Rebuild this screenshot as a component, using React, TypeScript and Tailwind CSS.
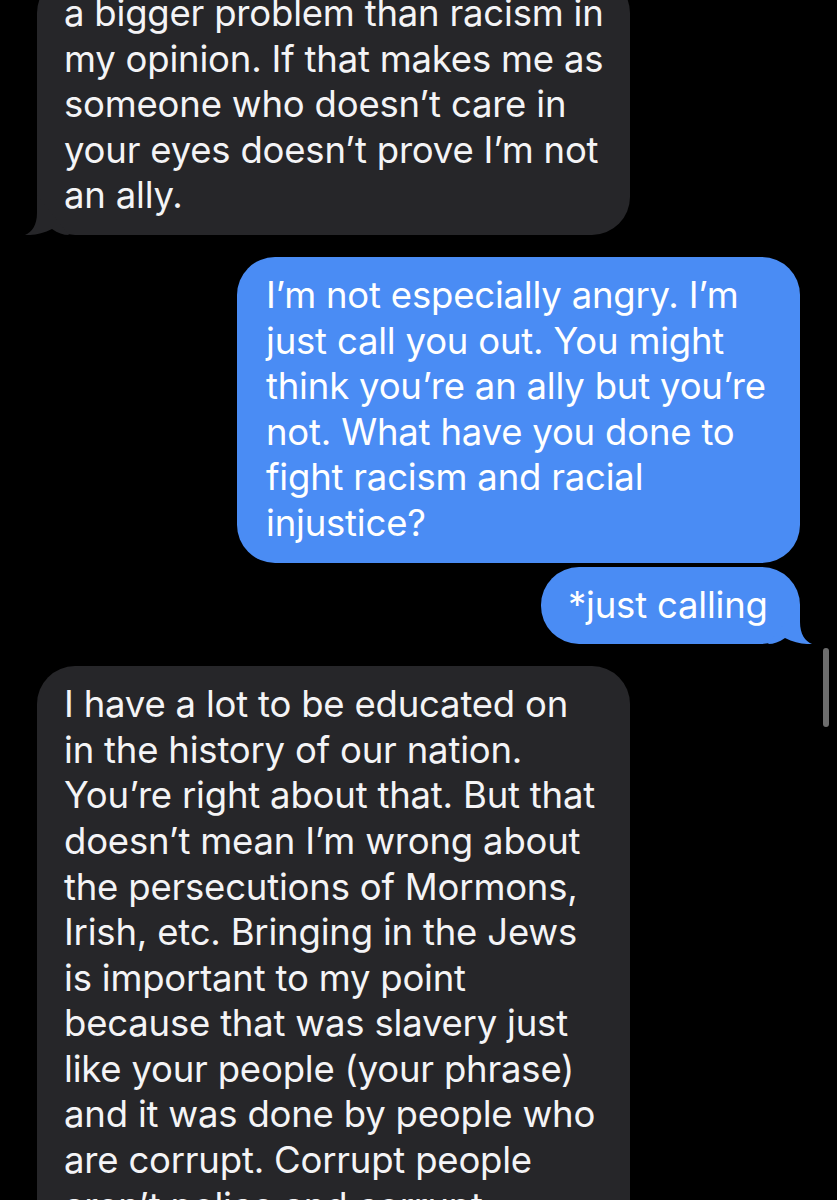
import React from "react";

const font = { fontFamily: "Inter, 'Noto Sans', sans-serif" };

function Tail({ side, color }: { side: "left" | "right"; color: string }) {
  const isRight = side === "right";
  return (
    <svg
      width="44"
      height="40"
      viewBox="0 0 44 40"
      className={
        isRight
          ? "absolute bottom-0 right-[-12px]"
          : "absolute bottom-0 left-[-12px] -scale-x-100"
      }
    >
      <path
        d="M32 0 L32 18 C32 30 37 37 44 40 C36 40.5 26 38.5 17 34 C11 38 6 40 0 40 Z"
        fill={color}
      />
    </svg>
  );
}

function Lines({ lines }: { lines: string[] }) {
  return (
    <>
      {lines.map((l, i) => (
        <div key={i} className="whitespace-nowrap">
          {l}
        </div>
      ))}
    </>
  );
}

export default function App() {
  const gray = "#262629";
  const blue = "#4a8cf4";
  return (
    <div
      className="relative h-[1200px] w-[837px] overflow-hidden bg-black text-[36.5px] leading-[45.6px] tracking-[-0.2px] text-[#f4f4f6]"
      style={font}
    >
      <div className="flex flex-col">
        <div className="relative ml-[37px] mt-[-25px] w-[593px] rounded-[38px] bg-[#262629] py-[16px] pl-[27px]">
          <Lines
            lines={[
              "a bigger problem than racism in",
              "my opinion. If that makes me as",
              "someone who doesn’t care in",
              "your eyes doesn’t prove I’m not",
              "an ally.",
            ]}
          />
          <Tail side="left" color={gray} />
        </div>

        <div className="mr-[37px] mt-[22px] flex flex-col items-end gap-[4px]">
          <div className="relative w-[563px] rounded-[38px] bg-[#4a8cf4] py-[16px] pl-[29px] text-white">
            <Lines
              lines={[
                "I’m not especially angry. I’m",
                "just call you out. You might",
                "think you’re an ally but you’re",
                "not. What have you done to",
                "fight racism and racial",
                "injustice?",
              ]}
            />
          </div>
          <div className="relative w-[259px] rounded-[38px] bg-[#4a8cf4] py-[16px] pl-[27px] text-white">
            <Lines lines={["*just calling"]} />
            <Tail side="right" color={blue} />
          </div>
        </div>

        <div className="relative ml-[37px] mt-[22px] w-[593px] rounded-[38px] bg-[#262629] py-[16px] pl-[27px]">
          <Lines
            lines={[
              "I have a lot to be educated on",
              "in the history of our nation.",
              "You’re right about that. But that",
              "doesn’t mean I’m wrong about",
              "the persecutions of Mormons,",
              "Irish, etc. Bringing in the Jews",
              "is important to my point",
              "because that was slavery just",
              "like your people (your phrase)",
              "and it was done by people who",
              "are corrupt. Corrupt people",
              "aren’t police and corrupt",
              "people aren’t everyone.",
            ]}
          />
        </div>
      </div>

      <div className="absolute left-[823px] top-[648px] h-[79px] w-[6px] rounded-full bg-[#6d6d6d]" />
    </div>
  );
}
